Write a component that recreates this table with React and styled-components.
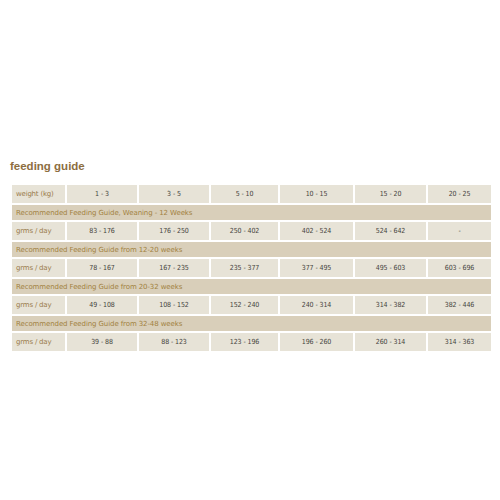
import styled, { createGlobalStyle } from "styled-components";

const GlobalStyle = createGlobalStyle`
  body {
    margin: 0;
    background: #fff;
    font-family: "DejaVu Sans", "Liberation Sans", sans-serif;
  }
`;

const weights = ["1 - 3", "3 - 5", "5 - 10", "10 - 15", "15 - 20", "20 - 25"];

// each section: heading + grams per day values
const sections = [
  {
    title: "Recommended Feeding Guide, Weaning - 12 Weeks",
    values: ["83 - 176", "176 - 250", "250 - 402", "402 - 524", "524 - 642", "-"],
  },
  {
    title: "Recommended Feeding Guide from 12-20 weeks",
    values: ["78 - 167", "167 - 235", "235 - 377", "377 - 495", "495 - 603", "603 - 696"],
  },
  {
    title: "Recommended Feeding Guide from 20-32 weeks",
    values: ["49 - 108", "108 - 152", "152 - 240", "240 - 314", "314 - 382", "382 - 446"],
  },
  {
    title: "Recommended Feeding Guide from 32-48 weeks",
    values: ["39 - 88", "88 - 123", "123 - 196", "196 - 260", "260 - 314", "314 - 363"],
  },
];

const App = () => {
  return (
    <>
      <GlobalStyle />
      <Page>
        <Title>feeding guide</Title>
        <Table>
          <Cell $label>weight (kg)</Cell>
          {weights.map((w) => (
            <Cell key={w}>{w}</Cell>
          ))}
          {sections.map((s) => (
            <Row key={s.title}>
              <Section>{s.title}</Section>
              <Cell $label>grms / day</Cell>
              {s.values.map((v, i) => (
                <Cell key={i}>{v}</Cell>
              ))}
            </Row>
          ))}
        </Table>
      </Page>
    </>
  );
};

const Page = styled.div`
  width: 500px;
  height: 500px;
  padding: 158px 9px 0 12px;
  box-sizing: border-box;
`;

const Title = styled.h1`
  margin: 0 0 11px -2px;
  font-family: "Liberation Sans", sans-serif;
  font-size: 11.5px;
  font-weight: bold;
  color: #8d6e3f;
  line-height: 16px;
`;

const Table = styled.div`
  display: grid;
  grid-template-columns: 53px 70px 70px 67px 73px 71px 63px;
  grid-template-rows: 18px repeat(4, 15px 18px);
  gap: 2px;
  background: #fff;
`;

const Row = styled.div`
  display: contents;
`;

const Cell = styled.div`
  display: flex;
  align-items: center;
  justify-content: ${(p) => (p.$label ? "flex-start" : "center")};
  padding-left: ${(p) => (p.$label ? "4px" : "0")};
  background: #e7e3d7;
  color: ${(p) => (p.$label ? "#9a7b4c" : "#46433d")};
  font-family: ${(p) =>
    p.$label ? '"DejaVu Sans", sans-serif' : '"DejaVu Sans Condensed", "DejaVu Sans", sans-serif'};
  font-size: 7px;
  letter-spacing: ${(p) => (p.$label ? "-0.2px" : "-0.1px")};
  white-space: nowrap;
`;

const Section = styled.div`
  grid-column: 1 / -1;
  display: flex;
  align-items: center;
  padding-left: 4px;
  background: #d9cfba;
  color: #a2823f;
  font-size: 7px;
  letter-spacing: -0.1px;
  white-space: nowrap;
`;

export default App;
